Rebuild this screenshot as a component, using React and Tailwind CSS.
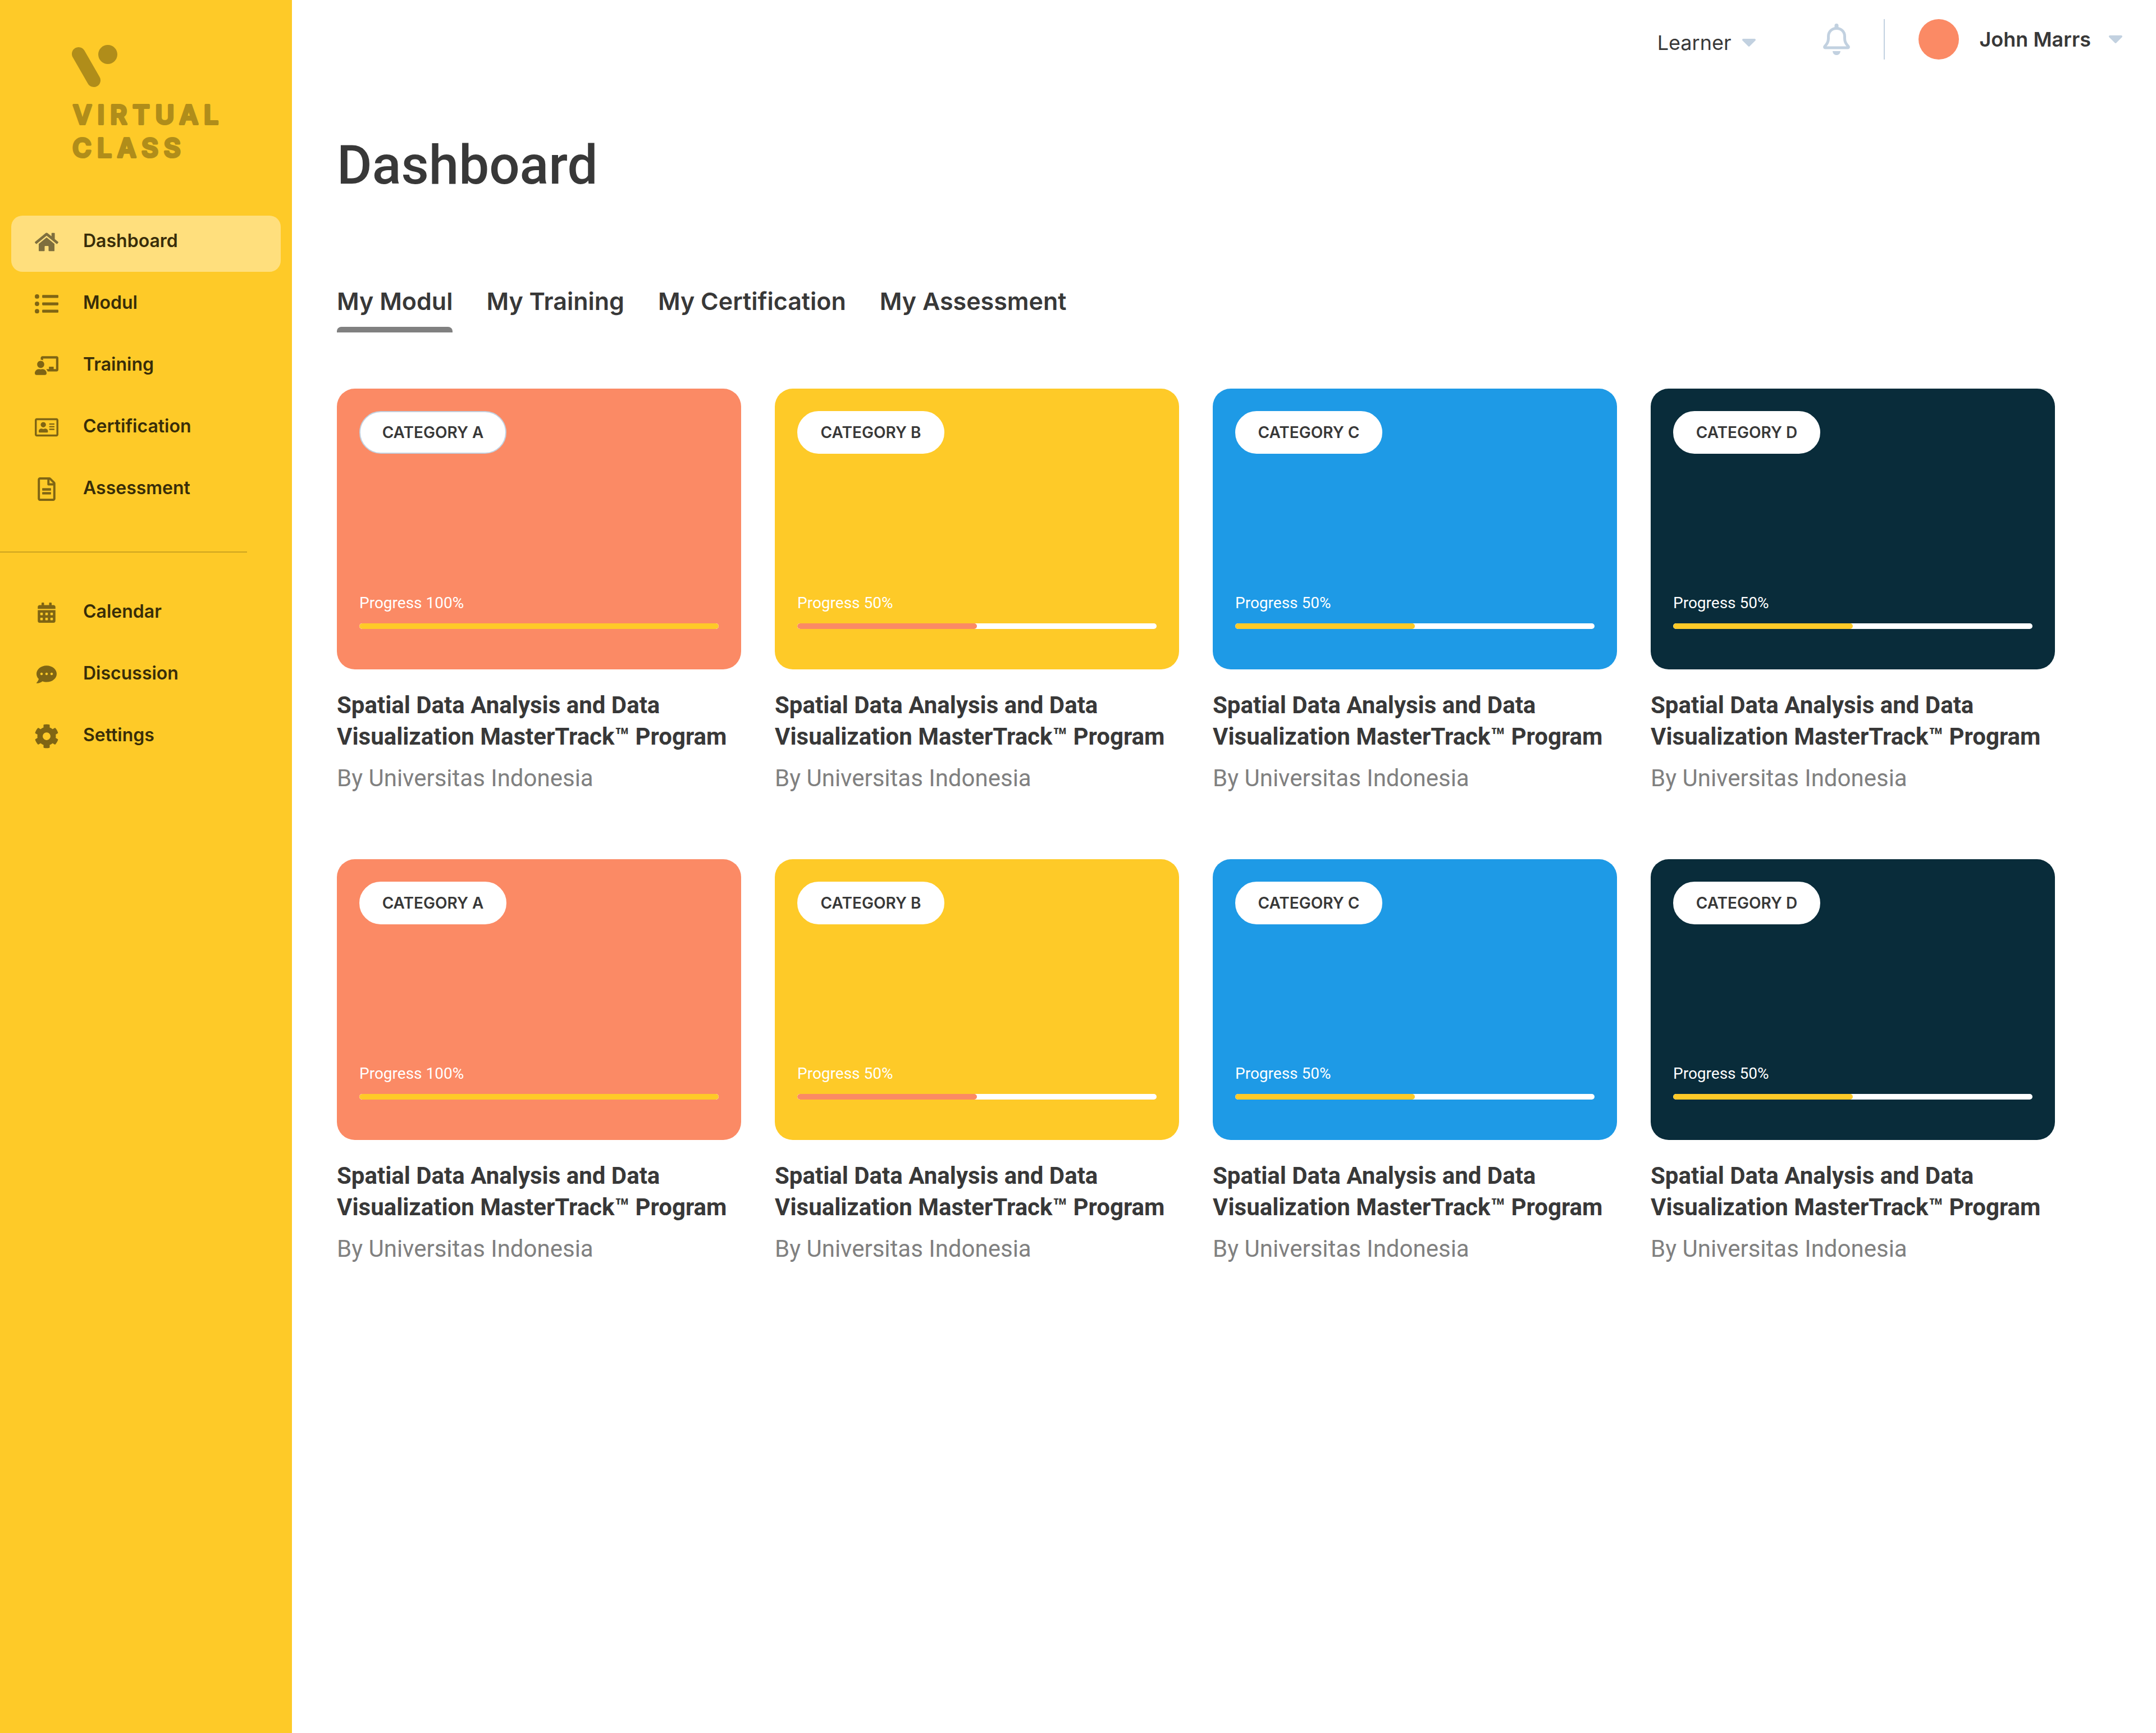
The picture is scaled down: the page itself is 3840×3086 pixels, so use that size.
import React from "react";
import {
  FaHome,
  FaListUl,
  FaChalkboardTeacher,
  FaRegAddressCard,
  FaRegFileAlt,
  FaCalendarAlt,
  FaCommentDots,
  FaCog,
} from "react-icons/fa";

const mainNav = [
  { label: "Dashboard", icon: FaHome, size: "w-[42px] h-[38px]", active: true },
  { label: "Modul", icon: FaListUl, size: "w-[42px] h-[42px]" },
  { label: "Training", icon: FaChalkboardTeacher, size: "w-[42px] h-[34px]" },
  { label: "Certification", icon: FaRegAddressCard, size: "w-[42px] h-[38px]" },
  { label: "Assessment", icon: FaRegFileAlt, size: "w-[32px] h-[42px]" },
];

const otherNav = [
  { label: "Calendar", icon: FaCalendarAlt, size: "w-[32px] h-[36px]" },
  { label: "Discussion", icon: FaCommentDots, size: "w-[36px] h-[36px]" },
  { label: "Settings", icon: FaCog, size: "w-[44px] h-[44px]" },
];

const tabs = ["My Modul", "My Training", "My Certification", "My Assessment"];

const themes = [
  { category: "CATEGORY A", bg: "bg-[#fb8a65]", bar: "bg-[#feca28]", progress: 100 },
  { category: "CATEGORY B", bg: "bg-[#feca28]", bar: "bg-[#fb8a65]", progress: 50 },
  { category: "CATEGORY C", bg: "bg-[#1e9ae6]", bar: "bg-[#feca28]", progress: 50 },
  { category: "CATEGORY D", bg: "bg-[#092c3a]", bar: "bg-[#feca28]", progress: 50 },
];

const courses = [
  { ...themes[0], outlined: true },
  themes[1],
  themes[2],
  themes[3],
  ...themes,
];

function Caret() {
  return (
    <svg viewBox="0 0 24 14" className="h-[14px] w-6 shrink-0" fill="#c2d1e0" aria-hidden="true">
      <path d="M2 0h20c1.800 0 2.600 2 1.400 3.300L13.400 13.300c-.8.9-2 .9-2.800 0L.6 3.300C-.6 2 .2 0 2 0z" />
    </svg>
  );
}

function Bell() {
  return (
    <svg viewBox="0 0 48 56" className="h-14 w-12" aria-hidden="true">
      <path
        d="M24 8.500C15.700 8.500 9.500 14.500 9.500 22.500v4c0 6-2.500 10-6 13.500-1.500 1.500-1 3 .5 3h40c1.500 0 2-1.500.5-3-3.500-3.500-6-7.500-6-13.500v-4C38.500 14.500 32.300 8.500 24 8.500z"
        fill="none"
        stroke="#c2d1e0"
        strokeWidth="5"
        strokeLinejoin="round"
      />
      <path d="M20.500 8V3.500a3.500 3.500 0 0 1 7 0V8z" fill="#c2d1e0" />
      <path d="M17 49h14c-.5 4.500-3 7-7 7s-6.500-2.500-7-7z" fill="#c2d1e0" />
    </svg>
  );
}

function Logo() {
  return (
    <div className="flex flex-col gap-5 pt-20 pl-32 text-[#b08d1a]">
      <svg viewBox="0 0 82 76" className="h-[76px] w-[82px]" fill="currentColor" aria-hidden="true">
        <path d="M12 16L39 63" stroke="currentColor" strokeWidth="24" strokeLinecap="round" />
        <circle cx="64" cy="17" r="17" />
      </svg>
      <svg
        viewBox="0 0 264 118"
        className="h-[118px] w-[264px] overflow-visible text-[46px] font-semibold tracking-[10px]"
        fill="currentColor"
        stroke="currentColor"
        strokeWidth="4"
        strokeLinejoin="round"
      >
        <text x="2" y="45">VIRTUAL</text>
        <text x="1" y="104">CLASS</text>
      </svg>
    </div>
  );
}

function NavList({ items }) {
  return (
    <ul className="flex flex-col gap-[10px] px-5">
      {items.map(({ label, icon: Icon, size, active }) => (
        <li key={label}>
          <a
            href="#"
            aria-current={active ? "page" : undefined}
            className={
              "flex h-[100px] items-center rounded-[20px] " + (active ? "bg-[#ffdf7d]" : "")
            }
          >
            <span className="ml-10 flex w-[46px] justify-center pb-[6px] text-black/50">
              <Icon className={size} />
            </span>
            <span className="ml-[42px] pb-[10px] text-[32px] leading-10 font-semibold text-[#382d09]">
              {label}
            </span>
          </a>
        </li>
      ))}
    </ul>
  );
}

function Sidebar() {
  return (
    <aside className="w-[520px] shrink-0 bg-[#feca28]">
      <Logo />
      <nav aria-label="Main" className="mt-[90px]">
        <NavList items={mainNav} />
        <hr className="mt-[58px] mb-[60px] w-[440px] border-t-2 border-[#cba220]" />
        <NavList items={otherNav} />
      </nav>
    </aside>
  );
}

function TopBar() {
  return (
    <header className="flex h-[140px] items-center justify-end pr-[60px] text-4xl leading-[44px] text-[#383838]">
      <button type="button" className="flex items-center gap-5 pt-3">
        Learner
        <Caret />
      </button>
      <button type="button" aria-label="Notifications" className="ml-[120px]">
        <Bell />
      </button>
      <span className="ml-[60px] h-[72px] w-[2px] bg-[#c2d1e0]" />
      <button type="button" className="ml-[60px] flex items-center font-semibold">
        <span className="size-[72px] rounded-full bg-[#fb8a65]" />
        <span className="ml-9">John Marrs</span>
        <span className="ml-8">
          <Caret />
        </span>
      </button>
    </header>
  );
}

function CourseCard({ category, bg, bar, progress, outlined }) {
  return (
    <article>
      <div className={"flex h-[500px] flex-col justify-between rounded-[32px] p-10 pb-[72px] " + bg}>
        <span
          className={
            "flex h-[76px] w-[262px] items-center justify-center rounded-full border-2 bg-white text-[28px] leading-8 font-semibold text-[#383838] " +
            (outlined ? "border-[#c2d1e0]" : "border-white")
          }
        >
          {category}
        </span>
        <div className="font-[Roboto,sans-serif]">
          <p className="text-[28px] leading-8 text-white">Progress {progress}%</p>
          <div className="mt-5 h-[10px] overflow-hidden rounded-full bg-white">
            <div className={"h-full rounded-full " + bar} style={{ width: progress + "%" }} />
          </div>
        </div>
      </div>
      <div className="font-[Roboto,sans-serif] text-[42px]">
        <h2 className="mt-9 leading-14 font-bold text-[#383838]">
          Spatial Data Analysis and Data
          <br />
          Visualization MasterTrack™ Program
        </h2>
        <p className="mt-[18px] leading-14 text-[#808080]">By Universitas Indonesia</p>
      </div>
    </article>
  );
}

export default function App() {
  return (
    <div className="flex min-h-screen bg-white font-[Inter,sans-serif]">
      <Sidebar />
      <div className="min-w-0 flex-1">
        <TopBar />
        <main className="pr-[180px] pl-20">
          <h1 className="mt-[98px] font-[Roboto,sans-serif] text-8xl leading-[112px] font-medium text-[#383838]">
            Dashboard
          </h1>
          <div role="tablist" className="mt-40 flex gap-15">
            {tabs.map((tab, i) => (
              <button
                key={tab}
                type="button"
                role="tab"
                aria-selected={i === 0}
                className="flex flex-col gap-5 text-[43px] leading-[52px] font-semibold text-[#383838]"
              >
                {tab}
                {i === 0 && <span className="h-[10px] w-full rounded-t-lg bg-[#808080]" />}
              </button>
            ))}
          </div>
          <section className="mt-[100px] grid grid-cols-4 gap-x-15 gap-y-[116px]">
            {courses.map((course, i) => (
              <CourseCard key={i} {...course} />
            ))}
          </section>
        </main>
      </div>
    </div>
  );
}
